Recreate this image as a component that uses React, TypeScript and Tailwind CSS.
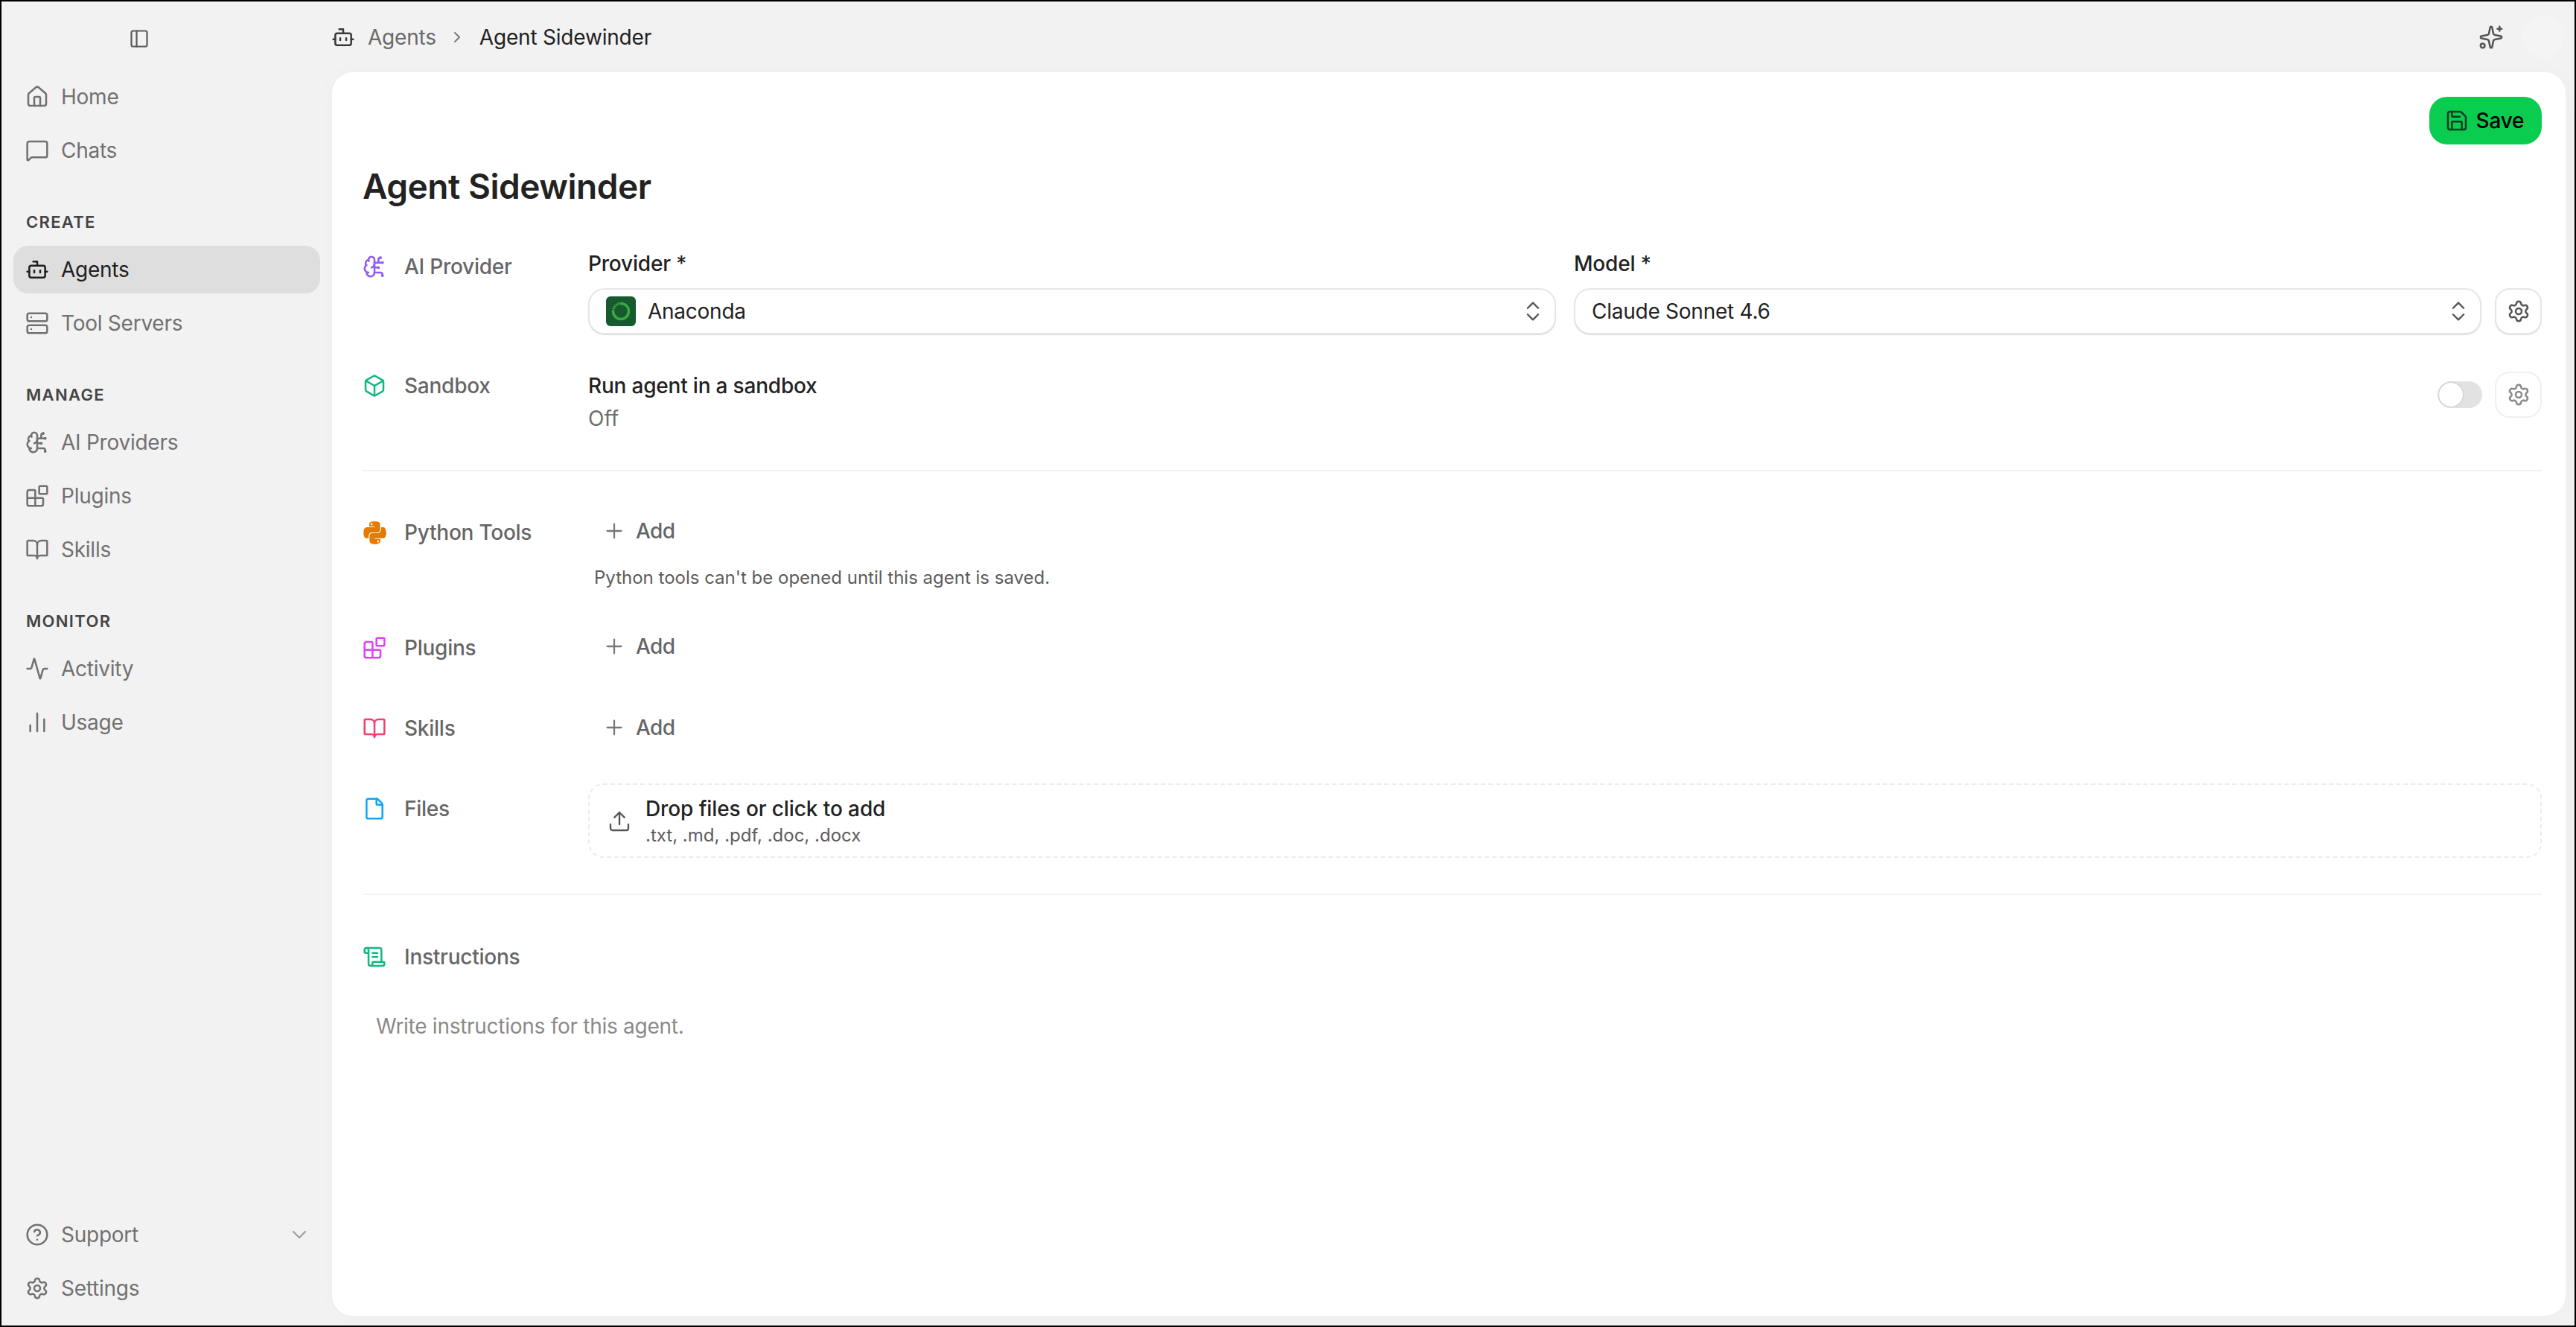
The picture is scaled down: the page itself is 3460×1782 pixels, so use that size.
import React from "react";
import {
  PanelLeft, House, MessageSquare, Bot, Server, Blocks, BookOpen, Activity, ChartNoAxesColumn,
  CircleHelp, Settings, ChevronDown, ChevronRight, ChevronsUpDown, Save, Sparkles, Box, Plus, File, Upload, ScrollText, BrainCircuit,
} from "lucide-react";
import { FaPython } from "react-icons/fa";

function NavItem({ icon: Icon, label, active = false }: { icon: any; label: string; active?: boolean }) {
  return (
    <div className={`flex h-[64px] w-[412px] items-center gap-[16px] rounded-[20px] px-[16px] text-[28px] leading-[40px] tracking-[-0.25px] ${active ? "bg-[#dedede] text-[#1e1e1e]" : "text-[#717171]"}`}>
      <Icon size={32} strokeWidth={1.9} className="shrink-0" />
      <span>{label}</span>
    </div>
  );
}

function SectionLabel({ children }: { children: React.ReactNode }) {
  return <div className="ml-[17px] mt-[50px] mb-[18px] h-[28px] text-[22px] font-semibold leading-[28px] tracking-[0.06em] text-[#444444]">{children}</div>;
}

function RowLabel({ icon, label }: { icon: React.ReactNode; label: string }) {
  return (
    <div className="flex h-[32px] w-[303px] shrink-0 items-center text-[#666666]">
      <div className="flex w-[56px] shrink-0 items-center">{icon}</div>
      <span className="text-[28px] font-medium leading-[32px] tracking-[-0.25px]">{label}</span>
    </div>
  );
}

function AddButton() {
  return (
    <div className="flex h-[40px] items-center pl-[19px] text-[#666666]">
      <Plus size={32} strokeWidth={1.7} className="mr-[13px] text-[#777777]" />
      <span className="text-[28px] font-medium leading-[40px] tracking-[-0.6px]">Add</span>
    </div>
  );
}

function GearButton({ dim = false }: { dim?: boolean }) {
  return (
    <div className={`flex h-[62px] w-[63px] shrink-0 items-center justify-center rounded-[20px] border-2 bg-white ${dim ? "border-[#f0f0f0] text-[#8a8a8a]" : "border-[#e6e6e6] text-[#555555] shadow-[0_1px_1px_rgba(0,0,0,0.12)]"}`}>
      <Settings size={32} strokeWidth={1.9} />
    </div>
  );
}

function SelectBox({ children, className = "" }: { children: React.ReactNode; className?: string }) {
  return (
    <div className={`flex h-[62px] items-center justify-between rounded-[22px] border-2 border-[#e6e6e6] bg-white pl-[22px] pr-[12px] shadow-[0_1px_1px_rgba(0,0,0,0.14)] ${className}`}>
      <div className="flex items-center text-[28px] leading-[36px] tracking-[-0.25px] text-[#222222]">{children}</div>
      <ChevronsUpDown size={34} strokeWidth={1.7} className="text-[#555555]" />
    </div>
  );
}

export default function App() {
  return (
    <div className="flex h-[1782px] w-[3460px] overflow-hidden border-2 border-black bg-[#f2f2f2] font-['Inter',sans-serif]">
      <aside className="flex w-[444px] shrink-0 flex-col pl-[16px]">
        <PanelLeft size={28} strokeWidth={1.9} className="ml-[155px] mt-[36px] text-[#5a5a5a]" />
        <div className="mt-[32px] flex flex-col gap-[8px]">
          <NavItem icon={House} label="Home" />
          <NavItem icon={MessageSquare} label="Chats" />
        </div>
        <SectionLabel>CREATE</SectionLabel>
        <div className="flex flex-col gap-[8px]">
          <NavItem icon={Bot} label="Agents" active />
          <NavItem icon={Server} label="Tool Servers" />
        </div>
        <SectionLabel>MANAGE</SectionLabel>
        <div className="flex flex-col gap-[8px]">
          <NavItem icon={BrainCircuit} label="AI Providers" />
          <NavItem icon={Blocks} label="Plugins" />
          <NavItem icon={BookOpen} label="Skills" />
        </div>
        <SectionLabel>MONITOR</SectionLabel>
        <div className="flex flex-col gap-[8px]">
          <NavItem icon={Activity} label="Activity" />
          <NavItem icon={ChartNoAxesColumn} label="Usage" />
        </div>
        <div className="mb-[18px] mt-auto flex flex-col gap-[8px]">
          <div className="flex w-[412px] items-center justify-between pr-[12px]">
            <NavItem icon={CircleHelp} label="Support" />
            <ChevronDown size={32} strokeWidth={1.7} className="-ml-[32px] shrink-0 text-[#a0a0a0]" />
          </div>
          <NavItem icon={Settings} label="Settings" />
        </div>
      </aside>

      <main className="flex min-w-0 flex-1 flex-col">
        <header className="-mt-[2px] flex h-[97px] shrink-0 items-center pr-[14px] pt-[2px] text-[28px] leading-[36px] tracking-[-0.2px]">
          <Bot size={32} strokeWidth={1.9} className="ml-[-1px] text-[#3a3a3a]" />
          <span className="ml-[17px] text-[#6a6a6a]">Agents</span>
          <ChevronRight size={24} strokeWidth={1.9} className="ml-[16px] text-[#777777]" />
          <span className="ml-[18px] font-normal text-[#222222]">Agent Sidewinder</span>
          <Sparkles size={34} strokeWidth={1.8} className="ml-auto text-[#555555]" />
          <div className="ml-[25px] h-[56px] w-[56px] rounded-full bg-[#f4f4f4]" />
        </header>

        <section className="mb-[13px] mr-[12px] flex-1 rounded-[28px] bg-white pl-[41px] pr-[32px] shadow-[0_0_30px_rgba(0,0,0,0.025)]">
          <div className="flex justify-end pt-[33px]">
            <div className="flex h-[64px] w-[151px] items-center justify-center gap-[10px] rounded-[24px] bg-[#0acc4f] pr-[3px] text-[28px] font-medium leading-[36px] tracking-[-0.2px] text-black">
              <Save size={32} strokeWidth={1.9} className="text-[#0f3d20]" />
              <span>Save</span>
            </div>
          </div>

          <h1 className="mt-[28px] h-[56px] text-[46px] font-semibold leading-[56px] tracking-[-0.01em] text-[#222222]">Agent Sidewinder</h1>

          <div className="mt-[62px] flex items-start">
            <div className="pt-[2px]">
              <RowLabel icon={<BrainCircuit size={32} strokeWidth={1.9} className="text-[#8b5cf6]" />} label="AI Provider" />
            </div>
            <div className="flex flex-1 items-end">
              <div className="mr-[24px] w-[1300px]">
                <div className="mb-[19px] h-[28px] text-[28px] font-medium leading-[28px] tracking-[-0.2px] text-[#222222]">Provider *</div>
                <SelectBox>
                  <svg width="40" height="40" viewBox="0 0 40 40" className="mr-[16px]">
                    <rect width="40" height="40" rx="6" fill="#165a2e" />
                    <path d="M20 9.5a10.5 10.5 0 1 1 -10.5 10.5" fill="none" stroke="#3aa845" strokeWidth="3.5" />
                    <path d="M9.5 20a10.5 10.5 0 0 1 10.5 -10.5" fill="none" stroke="#3aa845" strokeWidth="3.5" strokeDasharray="2 1" />
                  </svg>
                  <span>Anaconda</span>
                </SelectBox>
              </div>
              <div className="mr-[18px] min-w-0 flex-1">
                <div className="mb-[19px] h-[28px] text-[28px] font-medium leading-[28px] tracking-[-0.2px] text-[#222222]">Model *</div>
                <SelectBox>Claude Sonnet 4.6</SelectBox>
              </div>
              <GearButton />
            </div>
          </div>

          <div className="mt-[50px] flex items-start">
            <div className="pt-[3px]">
              <RowLabel icon={<Box size={32} strokeWidth={1.9} className="text-[#10b981]" />} label="Sandbox" />
            </div>
            <div className="flex flex-1 items-start justify-between">
              <div className="pt-[3px]">
                <div className="h-[32px] text-[28px] font-medium leading-[32px] tracking-[-0.2px] text-[#222222]">Run agent in a sandbox</div>
                <div className="mt-[12px] h-[32px] text-[28px] leading-[32px] text-[#6e6e6e]">Off</div>
              </div>
              <div className="flex items-start gap-[17px]">
                <div className="mt-[13px] flex h-[36px] w-[60px] items-center rounded-full bg-[#e2e2e2] pl-[2px]">
                  <div className="h-[32px] w-[32px] rounded-full bg-white shadow-[0_0_2px_rgba(0,0,0,0.25)]" />
                </div>
                <GearButton dim />
              </div>
            </div>
          </div>

          <div className="mt-[53px] h-[2px] bg-[#f2f2f2]" />

          <div className="mt-[60px] flex items-start">
            <div className="pt-[6px]">
              <RowLabel icon={<FaPython size={35} className="-ml-[1px] text-[#e57a00]" />} label="Python Tools" />
            </div>
            <AddButton />
          </div>
          <div className="ml-[311px] mt-[27px] h-[32px] text-[24px] leading-[32px] text-[#5c5c5c]">Python tools can't be opened until this agent is saved.</div>

          <div className="mt-[56px] flex items-start">
            <div className="pt-[6px]">
              <RowLabel icon={<Blocks size={32} strokeWidth={1.9} className="text-[#e040fb]" />} label="Plugins" />
            </div>
            <AddButton />
          </div>

          <div className="mt-[69px] flex items-start">
            <div className="pt-[5px]">
              <RowLabel icon={<BookOpen size={32} strokeWidth={1.9} className="text-[#f43f6e]" />} label="Skills" />
            </div>
            <AddButton />
          </div>

          <div className="mt-[55px] flex items-start">
            <div className="pt-[18px]">
              <RowLabel icon={<File size={32} strokeWidth={1.9} className="text-[#0ea5f5]" />} label="Files" />
            </div>
            <div className="flex h-[100px] flex-1 items-center rounded-[20px] border-2 border-dashed border-[#ececec] pl-[24px]">
              <Upload size={32} strokeWidth={1.8} className="mr-[19px] mt-[2px] text-[#555555]" />
              <div className="pt-[2px]">
                <div className="h-[38px] text-[28px] font-medium leading-[36px] tracking-[-0.1px] text-[#222222]">Drop files or click to add</div>
                <div className="h-[32px] text-[24px] leading-[32px] text-[#5c5c5c]">.txt, .md, .pdf, .doc, .docx</div>
              </div>
            </div>
          </div>

          <div className="mt-[48px] h-[2px] bg-[#f2f2f2]" />

          <div className="mt-[67px]">
            <RowLabel icon={<ScrollText size={32} strokeWidth={1.9} className="text-[#10b981]" />} label="Instructions" />
          </div>
          <div className="ml-[18px] mt-[61px] h-[32px] text-[28px] leading-[32px] tracking-[-0.27px] text-[#8a8a8a]">Write instructions for this agent.</div>
        </section>
      </main>
    </div>
  );
}
